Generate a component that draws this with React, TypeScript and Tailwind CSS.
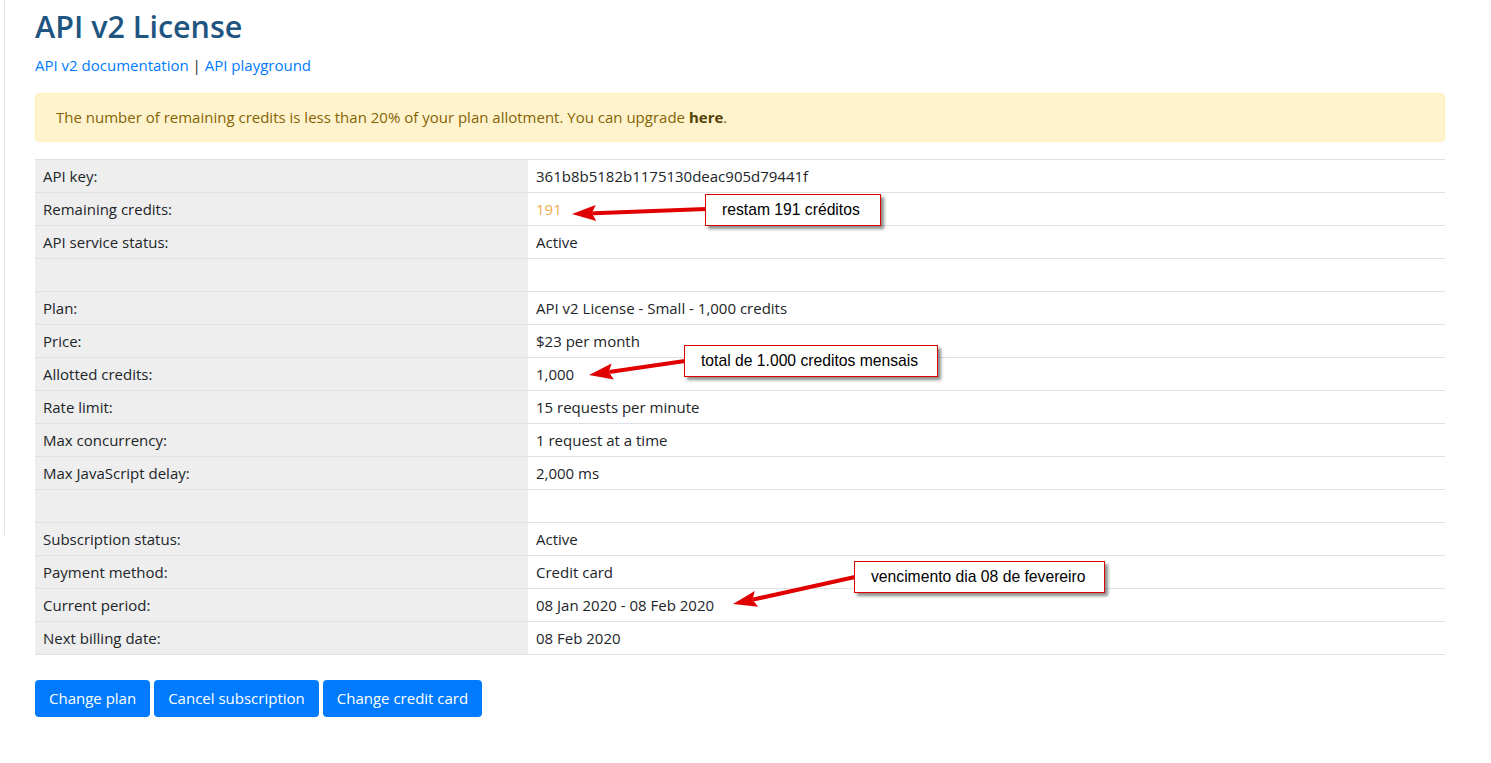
import React from "react";

type Row = { label: string; value?: React.ReactNode };

const ROWS: Row[] = [
  { label: "API key:", value: "361b8b5182b1175130deac905d79441f" },
  { label: "Remaining credits:", value: <span className="text-[#f0ad4e]">191</span> },
  { label: "API service status:", value: "Active" },
  { label: "" },
  { label: "Plan:", value: "API v2 License - Small - 1,000 credits" },
  { label: "Price:", value: "$23 per month" },
  { label: "Allotted credits:", value: "1,000" },
  { label: "Rate limit:", value: "15 requests per minute" },
  { label: "Max concurrency:", value: "1 request at a time" },
  { label: "Max JavaScript delay:", value: "2,000 ms" },
  { label: "" },
  { label: "Subscription status:", value: "Active" },
  { label: "Payment method:", value: "Credit card" },
  { label: "Current period:", value: "08 Jan 2020 - 08 Feb 2020" },
  { label: "Next billing date:", value: "08 Feb 2020" },
];

// annotation callouts drawn over the screenshot
const NOTES = [
  { text: "restam 191 créditos", box: "left-[705px] top-[194px] w-[176px]", from: [706, 209], to: [572, 214] },
  { text: "total de 1.000 creditos mensais", box: "left-[684px] top-[345px] w-[254px]", from: [685, 361], to: [589, 375] },
  { text: "vencimento dia 08 de fevereiro", box: "left-[854px] top-[561px] w-[251px]", from: [855, 577], to: [733, 604] },
];

function Arrow({ from, to }: { from: number[]; to: number[] }) {
  const [x1, y1] = from;
  const [x2, y2] = to;
  const dx = x1 - x2;
  const dy = y1 - y2;
  const len = Math.hypot(dx, dy);
  const ux = dx / len;
  const uy = dy / len;
  const hl = 24;
  const hw = 8;
  const bx = x2 + ux * hl;
  const by = y2 + uy * hl;
  const px = -uy;
  const py = ux;
  const head = `${x2},${y2} ${bx + px * hw},${by + py * hw} ${bx + ux * -4},${by + uy * -4} ${bx - px * hw},${by - py * hw}`;
  return (
    <g>
      <line x1={x1} y1={y1} x2={bx - ux * 2} y2={by - uy * 2} stroke="#e00000" strokeWidth={4} strokeLinecap="round" />
      <polygon points={head} fill="#e00000" />
    </g>
  );
}

export default function App() {
  return (
    <div
      className="relative min-h-[763px] bg-white text-[15px] leading-[1.5] text-[#212529] flex"
      style={{ fontFamily: '"Open Sans", "Noto Sans", sans-serif' }}
    >
      <div className="w-[5px] h-[535px] border-r border-[#e3e3e3] shrink-0" />
      <div className="flex-1 pl-[30px] pr-[46px] pt-[8px]">
        <h1 className="text-[30.5px] font-semibold leading-[1.2] text-[#1f5581] mb-[9px]">API v2 License</h1>
        <div className="text-[#007bff]">
          <a>API v2 documentation</a> <span className="text-[#212529]">|</span> <a>API playground</a>
        </div>
        <div className="mt-[17px] mb-[17px] rounded-[4px] border border-[#ffeeba] bg-[#fff3cd] text-[#856404] px-[20px] pt-[12px] pb-[12.5px]">
          The number of remaining credits is less than 20% of your plan allotment. You can upgrade{" "}
          <b className="text-[#533f03]">here</b>.
        </div>
        <div className="border-t border-[#dee2e6]">
          {ROWS.map((r, i) => (
            <div key={i} className="grid grid-cols-[493px_1fr] border-b border-[#dee2e6] h-[33px]">
              <div className="bg-[#eeeeee] px-[8px] flex items-center">{r.label}</div>
              <div className="px-[8px] flex items-center">{r.value}</div>
            </div>
          ))}
        </div>
        <div className="flex gap-[4px] mt-[25px]">
          {["Change plan", "Cancel subscription", "Change credit card"].map((b) => (
            <button
              key={b}
              className="h-[37px] px-[14px] rounded-[4px] bg-[#007bff] text-white text-[15px]"
            >
              {b}
            </button>
          ))}
        </div>
      </div>

      <svg className="absolute inset-0 pointer-events-none" width="1491" height="763">
        {NOTES.map((n, i) => (
          <Arrow key={i} from={n.from} to={n.to} />
        ))}
      </svg>
      {NOTES.map((n, i) => (
        <div
          key={i}
          className={`absolute ${n.box} h-[32px] bg-white border border-[#e00000] shadow-[3px_3px_3px_rgba(0,0,0,0.45)] flex items-center pl-[16px] text-[15.7px] text-black`}
          style={{ fontFamily: '"Liberation Sans", Arial, sans-serif' }}
        >
          {n.text}
        </div>
      ))}
    </div>
  );
}
